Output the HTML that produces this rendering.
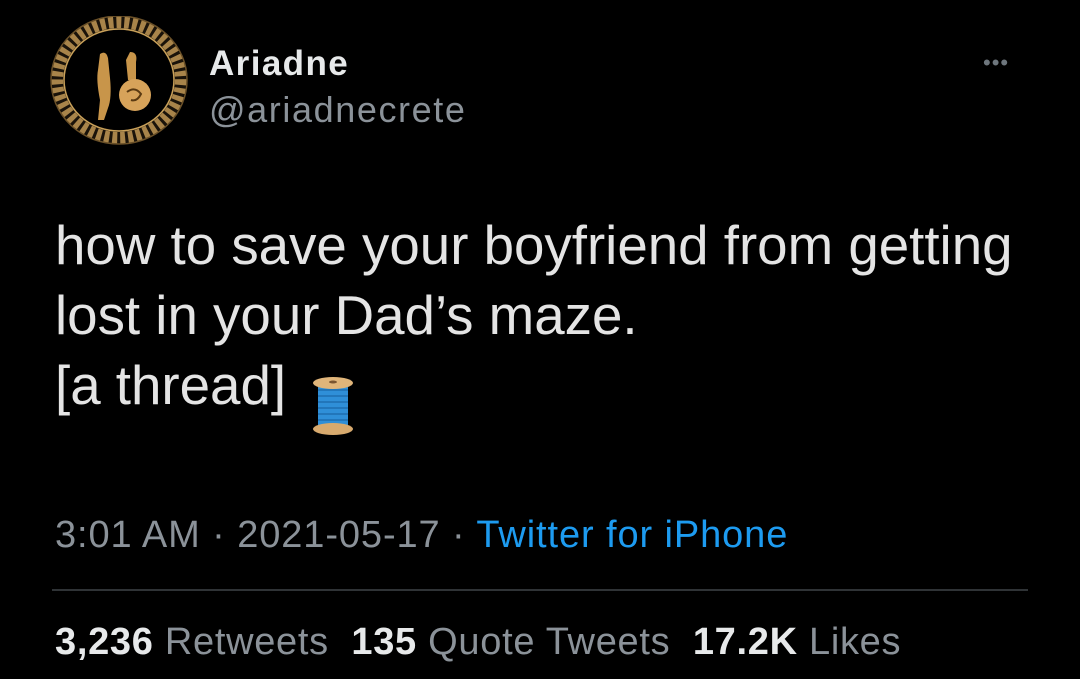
<!DOCTYPE html>
<html><head><meta charset="utf-8"><style>
html,body{margin:0;padding:0;background:#000;width:1080px;height:679px;overflow:hidden;font-family:"Liberation Sans",sans-serif;}
.abs{position:absolute;white-space:nowrap;}
</style></head><body>
<svg class="abs" style="left:50px;top:16px" width="140" height="130" viewBox="0 0 140 130">
<ellipse cx="69" cy="64" rx="67" ry="63" fill="#1a130a"/>
<ellipse cx="69" cy="64" rx="62" ry="58" fill="none" stroke="#a8844a" stroke-width="12" stroke-dasharray="5 3"/>
<ellipse cx="69" cy="64" rx="55" ry="51" fill="none" stroke="#c9a15a" stroke-width="1.5"/>
<ellipse cx="69" cy="64" rx="68" ry="64" fill="none" stroke="#6a5028" stroke-width="1.5"/>
<ellipse cx="69" cy="64" rx="54" ry="50" fill="#000"/>
<path d="M50 38 q6 -4 8 4 l2 20 q2 20 -2 30 l-4 12 h-6 l2 -20 q-4 -20 -2 -30z" fill="#c8954a"/>
<path d="M80 36 q8 0 6 10 l0 18 l-8 0 l-2 -20z" fill="#c8954a"/>
<circle cx="85" cy="79" r="16" fill="#d7a35a"/>
<path d="M77 76 q8 -6 14 2 q-4 8 -10 6" fill="none" stroke="#5a3a12" stroke-width="2"/>
</svg>
<div class="abs" style="left:209px;top:46px;font-size:35px;line-height:35px;font-weight:bold;color:#e7e9ea;letter-spacing:1.4px">Ariadne</div>
<div class="abs" style="left:209px;top:92px;font-size:36px;line-height:36px;color:#8b9299;letter-spacing:1.6px">@ariadnecrete</div>
<div class="abs" style="left:983px;top:50px;font-size:22px;color:#6e767d;letter-spacing:1px">•••</div>
<div class="abs" style="left:55px;top:210px;font-size:54.7px;line-height:70px;color:#e4e4e4;white-space:nowrap">how to save your boyfriend from getting<br>lost in your Dad’s maze.<br>[a thread]</div>
<svg class="abs" style="left:312px;top:376px" width="42" height="60" viewBox="0 0 42 60">
<rect x="6" y="8" width="30" height="44" fill="#2f8fd8"/>
<path d="M6 14h30M6 20h30M6 26h30M6 32h30M6 38h30M6 44h30" stroke="#1f6fb0" stroke-width="1.5"/>
<ellipse cx="21" cy="7" rx="20" ry="6" fill="#e0b57a"/>
<ellipse cx="21" cy="6" rx="4" ry="1.5" fill="#7a5530"/>
<ellipse cx="21" cy="53" rx="20" ry="6" fill="#d8aa6e"/>
</svg>
<div class="abs" style="left:55px;top:516px;font-size:38px;line-height:38px;color:#8b9299;letter-spacing:0.9px">3:01 AM · 2021-05-17 · <span style="color:#1d9bf0">Twitter for iPhone</span></div>
<div class="abs" style="left:52px;top:589px;width:976px;height:2px;background:#2f3336"></div>
<div class="abs" style="left:55px;top:623px;font-size:38px;line-height:38px;color:#8b9299;letter-spacing:0.7px"><b style="color:#e7e9ea">3,236</b> Retweets&nbsp; <b style="color:#e7e9ea">135</b> Quote Tweets&nbsp; <b style="color:#e7e9ea">17.2K</b> Likes</div>
</body></html>
